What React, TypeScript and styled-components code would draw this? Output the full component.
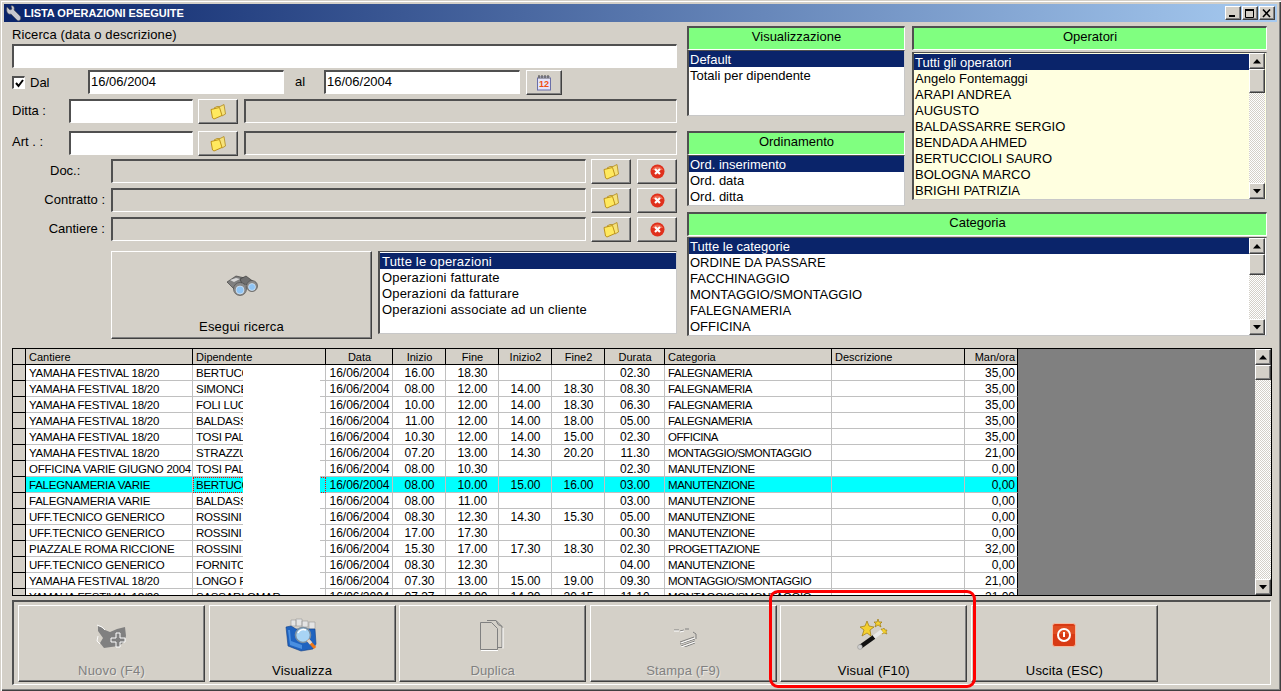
import React from "react";
import styled, { createGlobalStyle, css } from "styled-components";

const GlobalStyle = createGlobalStyle`
  html, body { margin: 0; padding: 0; background: #d4d0c8; overflow: hidden; }
  * { box-sizing: border-box; }
`;

const raised = css`
  border: 1px solid;
  border-color: #fff #404040 #404040 #fff;
  box-shadow: inset -1px -1px 0 #808080;
  background: #d4d0c8;
`;

const sunken = css`
  border-style: solid;
  border-width: 2px 1px 1px 2px;
  border-color: #505050 #fff #fff #505050;
`;

const Window = styled.div`
  position: relative;
  width: 1281px;
  height: 691px;
  padding-top: 4px;
  overflow: hidden;
  background: #d4d0c8;
  box-shadow: inset 1px 1px 0 #d4d0c8, inset 2px 2px 0 #fff, inset -1px -1px 0 #404040, inset -2px -2px 0 #808080;
  font: 13px "Liberation Sans", Arial, sans-serif;
  color: #000;
`;

const TitleBar = styled.div`
  display: flex;
  align-items: center;
  height: 18px;
  margin: 0 4px;
  padding: 0 2px 0 1px;
  background: linear-gradient(90deg, #0a246a, #a6caf0);
  color: #fff;
  font-weight: bold;
  font-size: 11px;
`;

const TitleText = styled.span`
  flex: 1;
  margin-left: 2px;
  letter-spacing: -0.04px;
`;

const WinButton = styled.div`
  ${raised}
  display: flex;
  align-items: center;
  justify-content: center;
  width: 16px;
  height: 14px;
  margin-left: 1px;
`;

const Form = styled.div`
  display: flex;
  gap: 10px;
  height: 313px;
  margin: 4px 0 0 12px;
`;

const LeftCol = styled.div`
  display: flex;
  flex-direction: column;
  width: 665px;
`;

const SearchLabel = styled.div`
  height: 18px;
  padding-top: 1px;
  letter-spacing: 0.1px;
`;

const Row = styled.div<{ $mt: number }>`
  display: flex;
  align-items: center;
  height: 25px;
  margin-top: ${(p) => p.$mt}px;
`;

const Field = styled.input<{ $w?: number }>`
  ${sunken}
  display: block;
  width: ${(p) => (p.$w ? `${p.$w}px` : "100%")};
  height: 24px;
  margin: 0;
  padding: 0 1px 3px 1px;
  background: #fff;
  font: 13px "Liberation Sans", Arial, sans-serif;
  color: #000;
  outline: none;
  border-radius: 0;
`;

const FlatField = styled.div<{ $w?: number; $ml?: number }>`
  ${sunken}
  height: 24px;
  width: ${(p) => (p.$w ? `${p.$w}px` : "auto")};
  flex: ${(p) => (p.$w ? "none" : 1)};
  margin-left: ${(p) => p.$ml ?? 0}px;
  align-self: flex-start;
  background: #d4d0c8;
`;

const RowField = styled(Field)`
  align-self: flex-start;
`;

const CheckBox = styled.div`
  ${sunken}
  display: flex;
  align-items: center;
  justify-content: center;
  width: 13px;
  height: 13px;
  background: #fff;
`;

const RowLabel = styled.div<{ $w: number; $pl?: number; $right?: boolean; $pb?: number }>`
  width: ${(p) => p.$w}px;
  padding-left: ${(p) => p.$pl ?? 0}px;
  padding-bottom: ${(p) => p.$pb ?? 2}px;
  text-align: ${(p) => (p.$right ? "right" : "left")};
`;

const IconButton = styled.div<{ $w?: number; $ml: number }>`
  ${raised}
  display: flex;
  align-items: center;
  justify-content: center;
  flex: none;
  width: ${(p) => p.$w ?? 40}px;
  height: 25px;
  margin-left: ${(p) => p.$ml}px;
`;

const SearchRow = styled.div`
  display: flex;
  gap: 6px;
  margin: 9px 0 0 99px;
`;

const ToolButton = styled.div<{ $off?: boolean }>`
  ${raised}
  display: flex;
  flex-direction: column;
  align-items: center;
  flex: none;
  width: 187px;
  height: 77px;
  padding-bottom: 2px;
  color: ${(p) => (p.$off ? "#808080" : "#000")};
  text-shadow: ${(p) => (p.$off ? "1px 1px 0 #e8e6e0" : "none")};
`;

const SearchButton = styled(ToolButton)`
  width: 261px;
  height: 88px;
  padding-bottom: 3px;
`;

const IconArea = styled.div`
  flex: 1;
  display: flex;
  align-items: center;
  justify-content: center;
`;

const ToolLabel = styled.div`
  height: 16px;
  line-height: 16px;
  letter-spacing: 0.18px;
`;

const RightCol = styled.div`
  display: grid;
  grid-template-columns: 218px 355px;
  grid-template-rows: 186px auto;
  column-gap: 7px;
  width: 580px;
`;

const Stack = styled.div`
  display: flex;
  flex-direction: column;
`;

const GreenHead = styled.div<{ $mt?: number }>`
  ${sunken}
  height: 24px;
  flex: none;
  margin-top: ${(p) => p.$mt ?? 0}px;
  line-height: 18px;
  text-align: center;
  background: #80ff80;
`;

const ListBox = styled.div<{ $h: number; $mt?: number; $w?: number; $bg?: string }>`
  display: flex;
  height: ${(p) => p.$h}px;
  width: ${(p) => (p.$w ? `${p.$w}px` : "auto")};
  flex: none;
  margin-top: ${(p) => p.$mt ?? 0}px;
  border-style: solid;
  border-width: 1px 1px 1px 2px;
  border-color: #505050 #c8c8c8 #c8c8c8 #505050;
  background: ${(p) => p.$bg ?? "#fff"};
  overflow: hidden;
`;

const ListItems = styled.div<{ $pt?: number; $spaced?: boolean }>`
  flex: 1;
  min-width: 0;
  padding-top: ${(p) => p.$pt ?? 0}px;
  letter-spacing: ${(p) => (p.$spaced ? "0.18px" : "normal")};
`;

const ListItem = styled.div<{ $sel?: boolean; $pl?: number }>`
  height: 16px;
  line-height: 17px;
  padding-left: ${(p) => p.$pl ?? 1}px;
  white-space: nowrap;
  background: ${(p) => (p.$sel ? "#0a246a" : "transparent")};
  color: ${(p) => (p.$sel ? "#fff" : "#000")};
`;

const ScrollBar = styled.div<{ $mr?: number }>`
  display: flex;
  flex-direction: column;
  flex: none;
  width: 16px;
  margin-right: ${(p) => p.$mr ?? 0}px;
  background: repeating-conic-gradient(#fff 0 25%, #d4d0c8 0 50%) 0 0 / 2px 2px;
`;

const ScrollArrow = styled.div<{ $end?: boolean }>`
  ${raised}
  display: flex;
  align-items: center;
  justify-content: center;
  flex: none;
  height: 16px;
  margin-top: ${(p) => (p.$end ? "auto" : 0)};
`;

const ScrollThumb = styled.div<{ $h: number }>`
  ${raised}
  flex: none;
  height: ${(p) => p.$h}px;
`;

const CategoryCell = styled(Stack)`
  grid-column: 1 / span 2;
`;

const GridFrame = styled.div`
  display: flex;
  width: 1260px;
  height: 248px;
  margin: 9px 0 0 12px;
  border: 1px solid #000;
  background: #808080;
`;

const GridTable = styled.div`
  flex: none;
  width: 1005px;
  overflow: hidden;
  background: #fff;
`;

const GridFill = styled.div`
  flex: 1;
`;

const columns = "13px 167px 133px 67px 53px 53px 53px 53px 60px 167px 133px 53px";

const HeadRow = styled.div`
  display: grid;
  grid-template-columns: ${columns};
  grid-template-rows: 15px;
  height: 16px;
  background: #d4d0c8;
  border-bottom: 1px solid #000;
`;

const HeadCell = styled.div<{ $align?: string }>`
  padding: 0 2px 0 3px;
  border-right: 1px solid #000;
  text-align: ${(p) => p.$align ?? "left"};
  font-size: 11px;
  line-height: 16px;
  white-space: nowrap;
  overflow: hidden;
`;

const DataRow = styled.div`
  display: grid;
  grid-template-columns: ${columns};
  grid-template-rows: 16px;
  height: 16px;
`;

const Indicator = styled.div`
  background: #d4d0c8;
  border-right: 1px solid #000;
  border-bottom: 1px solid #000;
`;

const Cell = styled.div<{ $align?: string; $hit?: boolean; $dark?: boolean }>`
  padding: 0 2px 0 3px;
  border-right: 1px solid ${(p) => (p.$dark ? "#000" : "#c0c0c0")};
  border-bottom: 1px solid #c0c0c0;
  background: ${(p) => (p.$hit ? "#00ffff" : "#fff")};
  text-align: ${(p) => p.$align ?? "left"};
  font-size: 12px;
  line-height: 16px;
  white-space: nowrap;
  overflow: hidden;
`;

const TextCell = styled(Cell)`
  font-size: 11.5px;
  letter-spacing: -0.25px;
`;

const CategoryText = styled(TextCell)`
  letter-spacing: -0.45px;
`;

const NameCell = styled(TextCell)<{ $focus?: boolean }>`
  position: relative;
  overflow: visible;
  ${(p) => p.$focus && "border: 1px dotted #f00; padding: 0 2px 0 2px; line-height: 14px;"}
`;

// blank patch the app leaves over the Dipendente column
const Patch = styled.div<{ $focus?: boolean }>`
  position: absolute;
  left: ${(p) => (p.$focus ? 49 : 50)}px;
  top: ${(p) => (p.$focus ? -1 : 0)}px;
  bottom: -1px;
  width: 77px;
  background: #fff;
`;

const Toolbar = styled.div`
  display: flex;
  gap: 3.6px;
  width: 1259px;
  height: 85px;
  margin: 4px 0 0 12px;
  padding: 3px 0 0 4px;
  border-style: solid;
  border-width: 2px 1px 1px 2px;
  border-color: #505050 #fff #fff #505050;
`;

const Annotation = styled.div`
  position: absolute;
  left: 769px;
  top: 590px;
  width: 207px;
  height: 98px;
  border: 3px solid #f00;
  border-radius: 9px;
  pointer-events: none;
`;

const Wrench = () => (
  <svg width="17" height="17" viewBox="0 0 17 17">
    <path d="M2 2l3 3 2-1-1-3C8 0 10 2 9 5l6 6c1 1 1 3 0 4s-2 1-3 0L6 9C3 10 1 7 2 2z" fill="#c8c8d0" stroke="#555" strokeWidth="0.6" />
  </svg>
);

const WinMin = () => (
  <svg width="10" height="9" viewBox="0 0 10 9">
    <rect x="1" y="6" width="6" height="2" fill="#000" />
  </svg>
);

const WinMax = () => (
  <svg width="10" height="9" viewBox="0 0 10 9">
    <path d="M0.5 1.5h8v7h-8z" fill="none" stroke="#000" />
    <rect y="0" width="9" height="2" fill="#000" />
  </svg>
);

const WinClose = () => (
  <svg width="10" height="9" viewBox="0 0 10 9">
    <path d="M1 0.5l7 7.5M8 0.5L1 8" stroke="#000" strokeWidth="1.6" />
  </svg>
);

const Check = () => (
  <svg width="9" height="9" viewBox="0 0 9 9">
    <path d="M1 4l2.500 3L8 1" fill="none" stroke="#000" strokeWidth="2" />
  </svg>
);

const Folder = () => (
  <svg width="16" height="16" viewBox="0 0 16 16">
    <path d="M4 4l3-1.500h3L14 .5 15.500 10 12 12z" fill="#f6e27a" stroke="#b08a20" strokeWidth="0.8" />
    <path d="M1 5.500L9.500 3.500 12 11.500 4 15 2.500 14z" fill="#ffe95e" stroke="#b88a10" strokeWidth="0.9" />
  </svg>
);

const RedX = () => (
  <svg width="15" height="15" viewBox="0 0 15 15">
    <circle cx="7.5" cy="7.5" r="7" fill="#e0301c" />
    <path d="M2 6a6 6 0 0 1 11 0z" fill="#f06a50" />
    <path d="M5 5l5 5M10 5l-5 5" stroke="#fff" strokeWidth="2.2" />
  </svg>
);

const Calendar = () => (
  <svg width="16" height="16" viewBox="0 0 16 16">
    <rect x="1.500" y="3" width="13" height="12" fill="#e4e4fa" stroke="#6a6fa8" />
    <rect x="2" y="1" width="12" height="3" fill="#a0a0b0" />
    <path d="M3 0v3M6 0v3M9 0v3M12 0v3" stroke="#444" />
    <text x="8" y="12" textAnchor="middle" fontSize="9" fontWeight="bold" fill="#f05010" fontFamily="Liberation Sans">12</text>
  </svg>
);

const Binoculars = () => (
  <svg width="32" height="24" viewBox="0 0 32 24">
    <path d="M1 8l9-6 9 2-6 10-4 2z" fill="#7f7f7f" stroke="#333" strokeWidth="0.6" />
    <path d="M14 5l6-3 8 6-3 3-9-1z" fill="#6f6f6f" stroke="#333" strokeWidth="0.6" />
    <path d="M4 6l6-2 4 1-6 3z" fill="#d8d8d8" />
    <circle cx="14" cy="15" r="6.500" fill="#8a8a8a" stroke="#444" strokeWidth="0.6" />
    <circle cx="14" cy="16" r="4" fill="#8fc4f4" stroke="#e8f2fc" strokeWidth="0.6" />
    <circle cx="26" cy="12" r="5.500" fill="#8a8a8a" stroke="#444" strokeWidth="0.6" />
    <circle cx="26" cy="13" r="3.500" fill="#8fc4f4" stroke="#e8f2fc" strokeWidth="0.6" />
  </svg>
);

const NewOff = () => (
  <svg width="34" height="34" viewBox="0 -3 34 34">
    <path d="M3 5l3 1 4 3 5 2 7-3 8-2 1 9-2 6-5 4-8 1-7 1-4-5 3-5-5-7z" fill="#808080" />
    <path d="M2 4l5 2 3 3M3 15l-1 5 3 3" fill="none" stroke="#fff" strokeWidth="0.9" />
    <path d="M21 12h4v5h5v4h-5v5h-4v-5h-5v-4h5z" fill="#808080" stroke="#fff" />
  </svg>
);

const FolderSearch = () => (
  <svg width="34" height="34" viewBox="0 0 34 34">
    <path d="M6 2h5v6H6zM11 1h6v7h-6zM17 3h6v6h-6zM24 4h6v7h-6z" fill="#e4e4e4" stroke="#999" strokeWidth="0.6" />
    <path d="M1 9l5-1 5 3h19l1 15-3 5-12 2L3 28z" fill="#1f63c0" stroke="#123f86" strokeWidth="0.6" />
    <path d="M3 12l2 15 12 4 0-4L6 23 5 12z" fill="#4a8fe0" />
    <circle cx="18" cy="17" r="7.500" fill="#a8d4f4" stroke="#7a8ea0" strokeWidth="1.6" />
    <path d="M13 15a6 6 0 0 1 8-3" fill="none" stroke="#fff" strokeWidth="1.4" />
    <path d="M23 22l7 8" stroke="#f07818" strokeWidth="3.2" />
    <path d="M23 22l3 3.400" stroke="#d8d8d8" strokeWidth="3.2" />
  </svg>
);

const DuplicateOff = () => (
  <svg width="30" height="34" viewBox="0 0 30 34">
    <path d="M9 2.500h9l6 6v21h-8" fill="none" stroke="#808080" />
    <path d="M18 2.500l2 4 4 2" fill="none" stroke="#808080" />
    <path d="M2.500 6.500h11l6 6v21h-17z" transform="translate(0 -2)" fill="#d4d0c8" stroke="#808080" />
    <path d="M3 32.500h17M25 30.500V10" stroke="#fff" />
  </svg>
);

const PrintOff = () => (
  <svg width="30" height="24" viewBox="-3 -3 30 24">
    <path d="M3 4h5M9 5l4-1M14 3h4" stroke="#808080" />
    <path d="M3 5h5M9 6l4-1" stroke="#fff" />
    <path d="M9 16l14-5M9 18l15-5M10 20l14-5M11 22l13-5" stroke="#808080" />
    <path d="M22 6l3 2v5" fill="none" stroke="#808080" />
    <path d="M10 17l14-5M10 21l14-5" stroke="#fff" />
  </svg>
);

const Wand = () => (
  <svg width="34" height="34" viewBox="0 0 34 34">
    <path d="M10 3l2 5 5 1-4 3 1 6-4-3-5 3 2-6-4-3 5-1z" fill="#f4d030" stroke="#9c7a10" strokeWidth="0.7" />
    <path d="M21 1l1 3 3 0-2 2 1 3-3-2-3 2 1-3-2-2 3 0z" fill="#f4d030" stroke="#9c7a10" strokeWidth="0.7" />
    <path d="M27 10l1 2 2 0-1 2 1 2-3-1-2 1 0-3-1-2 2 0z" fill="#f4d030" stroke="#9c7a10" strokeWidth="0.6" />
    <path d="M3 29L17 19" stroke="#111" strokeWidth="4.4" />
    <path d="M17 19l8-6" stroke="#e8e8e8" strokeWidth="4" />
    <circle cx="3" cy="29" r="2.400" fill="#d0d0d0" stroke="#888" strokeWidth="0.5" />
  </svg>
);

const Power = () => (
  <svg width="24" height="24" viewBox="0 0 24 24">
    <rect x="0.500" y="0.500" width="23" height="23" rx="2.500" fill="#d83a14" stroke="#f4b8a0" />
    <path d="M1 3h22v8H1z" fill="#e86030" opacity="0.5" />
    <circle cx="12" cy="12" r="6" fill="none" stroke="#fff" strokeWidth="2" />
    <path d="M12 9v5" stroke="#fff" strokeWidth="2" />
  </svg>
);

const ArrowUp = () => (
  <svg width="8" height="5" viewBox="0 0 8 5">
    <path d="M4 0l4 4.500H0z" fill="#000" />
  </svg>
);

const ArrowDown = () => (
  <svg width="8" height="5" viewBox="0 0 8 5">
    <path d="M0 0h8L4 4.500z" fill="#000" />
  </svg>
);

const Scroll = ({ thumb, mr }: { thumb: number; mr?: number }) => (
  <ScrollBar $mr={mr}>
    <ScrollArrow>
      <ArrowUp />
    </ScrollArrow>
    <ScrollThumb $h={thumb} />
    <ScrollArrow $end>
      <ArrowDown />
    </ScrollArrow>
  </ScrollBar>
);

const operators = [
  "Tutti gli operatori",
  "Angelo Fontemaggi",
  "ARAPI ANDREA",
  "AUGUSTO",
  "BALDASSARRE SERGIO",
  "BENDADA AHMED",
  "BERTUCCIOLI SAURO",
  "BOLOGNA MARCO",
  "BRIGHI PATRIZIA",
];

const categories = [
  "Tutte le categorie",
  "ORDINE DA PASSARE",
  "FACCHINAGGIO",
  "MONTAGGIO/SMONTAGGIO",
  "FALEGNAMERIA",
  "OFFICINA",
];

const operations = [
  "Tutte le operazioni",
  "Operazioni fatturate",
  "Operazioni da fatturare",
  "Operazioni associate ad un cliente",
];

const headers: [string, string][] = [
  ["Cantiere", "left"],
  ["Dipendente", "left"],
  ["Data", "center"],
  ["Inizio", "center"],
  ["Fine", "center"],
  ["Inizio2", "center"],
  ["Fine2", "center"],
  ["Durata", "center"],
  ["Categoria", "left"],
  ["Descrizione", "left"],
  ["Man/ora", "right"],
];

const YF = "YAMAHA FESTIVAL 18/20";
const UT = "UFF.TECNICO GENERICO";
const FV = "FALEGNAMERIA VARIE";
const FA = "FALEGNAMERIA";
const MA = "MANUTENZIONE";
const MS = "MONTAGGIO/SMONTAGGIO";

const rows = [
  [YF, "BERTUCC", "16.00", "18.30", "", "", "02.30", FA, "35,00"],
  [YF, "SIMONCE", "08.00", "12.00", "14.00", "18.30", "08.30", FA, "35,00"],
  [YF, "FOLI LUC", "10.00", "12.00", "14.00", "18.30", "06.30", FA, "35,00"],
  [YF, "BALDASS", "11.00", "12.00", "14.00", "18.00", "05.00", FA, "35,00"],
  [YF, "TOSI PAL", "10.30", "12.00", "14.00", "15.00", "02.30", "OFFICINA", "35,00"],
  [YF, "STRAZZU", "07.20", "13.00", "14.30", "20.20", "11.30", MS, "21,00"],
  ["OFFICINA VARIE GIUGNO 2004", "TOSI PAL", "08.00", "10.30", "", "", "02.30", MA, "0,00"],
  [FV, "BERTUCC", "08.00", "10.00", "15.00", "16.00", "03.00", MA, "0,00"],
  [FV, "BALDASS", "08.00", "11.00", "", "", "03.00", MA, "0,00"],
  [UT, "ROSSINI", "08.30", "12.30", "14.30", "15.30", "05.00", MA, "0,00"],
  [UT, "ROSSINI", "17.00", "17.30", "", "", "00.30", MA, "0,00"],
  ["PIAZZALE ROMA RICCIONE", "ROSSINI", "15.30", "17.00", "17.30", "18.30", "02.30", "PROGETTAZIONE", "32,00"],
  [UT, "FORNITO", "08.30", "12.30", "", "", "04.00", MA, "0,00"],
  [YF, "LONGO F", "07.30", "13.00", "15.00", "19.00", "09.30", MS, "21,00"],
  [YF, "SASSARI OMAR", "07.37", "13.00", "14.30", "20.15", "11.10", MS, "21,00"],
];

const ACTIVE_ROW = 7;
const LAST_ROW = rows.length - 1;

const App = () => (
  <Window>
    <GlobalStyle />
    <TitleBar>
      <Wrench />
      <TitleText>LISTA OPERAZIONI ESEGUITE</TitleText>
      <WinButton>
        <WinMin />
      </WinButton>
      <WinButton>
        <WinMax />
      </WinButton>
      <WinButton>
        <WinClose />
      </WinButton>
    </TitleBar>

    <Form>
      <LeftCol>
        <SearchLabel>Ricerca (data o descrizione)</SearchLabel>
        <Field readOnly />
        <Row $mt={2}>
          <CheckBox>
            <Check />
          </CheckBox>
          <RowLabel $w={63} $pl={5} $pb={0}>
            Dal
          </RowLabel>
          <RowField $w={196} readOnly defaultValue="16/06/2004" />
          <RowLabel $w={40} $pl={11}>
            al
          </RowLabel>
          <RowField $w={196} readOnly defaultValue="16/06/2004" />
          <IconButton $w={36} $ml={6}>
            <Calendar />
          </IconButton>
        </Row>
        <Row $mt={4}>
          <RowLabel $w={57}>Ditta :</RowLabel>
          <RowField $w={124} readOnly />
          <IconButton $ml={5}>
            <Folder />
          </IconButton>
          <FlatField $ml={6} />
        </Row>
        <Row $mt={7}>
          <RowLabel $w={57} $pb={4}>
            Art . :
          </RowLabel>
          <RowField $w={124} readOnly />
          <IconButton $ml={5}>
            <Folder />
          </IconButton>
          <FlatField $ml={6} />
        </Row>
        <Row $mt={3}>
          <RowLabel $w={99} $pl={38}>
            Doc.:
          </RowLabel>
          <FlatField $w={475} />
          <IconButton $ml={5}>
            <Folder />
          </IconButton>
          <IconButton $ml={6}>
            <RedX />
          </IconButton>
        </Row>
        <Row $mt={4}>
          <RowLabel $w={93} $right>
            Contratto :
          </RowLabel>
          <FlatField $w={475} $ml={6} />
          <IconButton $ml={5}>
            <Folder />
          </IconButton>
          <IconButton $ml={6}>
            <RedX />
          </IconButton>
        </Row>
        <Row $mt={4}>
          <RowLabel $w={93} $right>
            Cantiere :
          </RowLabel>
          <FlatField $w={475} $ml={6} />
          <IconButton $ml={5}>
            <Folder />
          </IconButton>
          <IconButton $ml={6}>
            <RedX />
          </IconButton>
        </Row>
        <SearchRow>
          <SearchButton>
            <IconArea>
              <Binoculars />
            </IconArea>
            <ToolLabel>Esegui ricerca</ToolLabel>
          </SearchButton>
          <ListBox $h={83} $w={299}>
            <ListItems $pt={1} $spaced>
              {operations.map((o, i) => (
                <ListItem key={o} $sel={i === 0} $pl={2}>
                  {o}
                </ListItem>
              ))}
            </ListItems>
          </ListBox>
        </SearchRow>
      </LeftCol>

      <RightCol>
        <Stack>
          <GreenHead>Visualizzazione</GreenHead>
          <ListBox $h={66}>
            <ListItems>
              <ListItem $sel>Default</ListItem>
              <ListItem>Totali per dipendente</ListItem>
            </ListItems>
          </ListBox>
          <GreenHead $mt={15}>Ordinamento</GreenHead>
          <ListBox $h={51}>
            <ListItems>
              <ListItem $sel>Ord. inserimento</ListItem>
              <ListItem>Ord. data</ListItem>
              <ListItem>Ord. ditta</ListItem>
            </ListItems>
          </ListBox>
        </Stack>
        <Stack>
          <GreenHead>Operatori</GreenHead>
          <ListBox $h={148} $mt={2} $bg="#ffffe0">
            <ListItems $pt={1}>
              {operators.map((o, i) => (
                <ListItem key={o} $sel={i === 0}>
                  {o}
                </ListItem>
              ))}
            </ListItems>
            <Scroll thumb={24} mr={1} />
          </ListBox>
        </Stack>
        <CategoryCell>
          <GreenHead>Categoria</GreenHead>
          <ListBox $h={99} $mt={1}>
            <ListItems>
              {categories.map((o, i) => (
                <ListItem key={o} $sel={i === 0}>
                  {o}
                </ListItem>
              ))}
            </ListItems>
            <Scroll thumb={21} mr={1} />
          </ListBox>
        </CategoryCell>
      </RightCol>
    </Form>

    <GridFrame>
      <GridTable>
        <HeadRow>
          <HeadCell />
          {headers.map(([label, align]) => (
            <HeadCell key={label} $align={align}>
              {label}
            </HeadCell>
          ))}
        </HeadRow>
        {rows.map((r, i) => {
          const hit = i === ACTIVE_ROW;
          return (
            <DataRow key={i}>
              <Indicator />
              <TextCell $hit={hit}>{r[0]}</TextCell>
              <NameCell $hit={hit} $focus={hit}>
                {r[1]}
                {i !== LAST_ROW && <Patch $focus={hit} />}
              </NameCell>
              <Cell $hit={hit} $align="center">
                16/06/2004
              </Cell>
              {r.slice(2, 7).map((v, j) => (
                <Cell key={j} $hit={hit} $align="center">
                  {v}
                </Cell>
              ))}
              <CategoryText $hit={hit}>{r[7]}</CategoryText>
              <Cell $hit={hit} />
              <Cell $hit={hit} $align="right" $dark>
                {r[8]}
              </Cell>
            </DataRow>
          );
        })}
      </GridTable>
      <GridFill />
      <Scroll thumb={15} />
    </GridFrame>

    <Toolbar>
      <ToolButton $off>
        <IconArea>
          <NewOff />
        </IconArea>
        <ToolLabel>Nuovo (F4)</ToolLabel>
      </ToolButton>
      <ToolButton>
        <IconArea>
          <FolderSearch />
        </IconArea>
        <ToolLabel>Visualizza</ToolLabel>
      </ToolButton>
      <ToolButton $off>
        <IconArea>
          <DuplicateOff />
        </IconArea>
        <ToolLabel>Duplica</ToolLabel>
      </ToolButton>
      <ToolButton $off>
        <IconArea>
          <PrintOff />
        </IconArea>
        <ToolLabel>Stampa (F9)</ToolLabel>
      </ToolButton>
      <ToolButton>
        <IconArea>
          <Wand />
        </IconArea>
        <ToolLabel>Visual (F10)</ToolLabel>
      </ToolButton>
      <ToolButton>
        <IconArea>
          <Power />
        </IconArea>
        <ToolLabel>Uscita (ESC)</ToolLabel>
      </ToolButton>
    </Toolbar>

    <Annotation />
  </Window>
);

export default App;
